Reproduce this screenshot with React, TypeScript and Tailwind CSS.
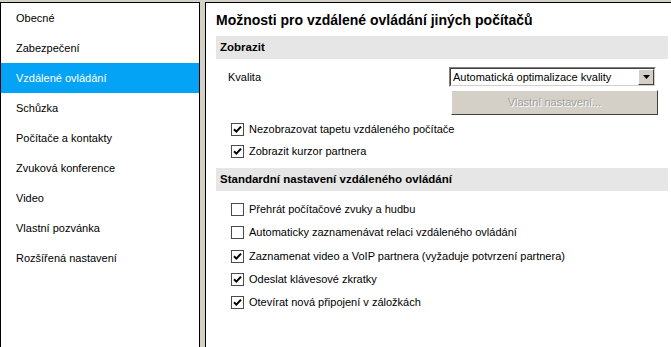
const FONT = "font-['Tahoma','Liberation_Sans',sans-serif]";

const navItems = [
  "Obecné",
  "Zabezpečení",
  "Vzdálené ovládání",
  "Schůzka",
  "Počítače a kontakty",
  "Zvuková konference",
  "Video",
  "Vlastní pozvánka",
  "Rozšířená nastavení",
];

function Check({ checked, label, h = "h-[23px]" }: { checked: boolean; label: string; h?: string }) {
  return (
    <div className={`flex ${h} items-center pl-[15px]`}>
      <span className="flex h-[13px] w-[13px] shrink-0 items-center justify-center border border-[#4a4a4a] bg-white">
        {checked && (
          <svg width="9" height="9" viewBox="0 0 9 9">
            <path d="M1 4.2 L3.4 6.6 L8 1.6" fill="none" stroke="#000" strokeWidth="2" />
          </svg>
        )}
      </span>
      <span className="ml-[5px] text-[11px] text-black">{label}</span>
    </div>
  );
}

function Band({ children }: { children: React.ReactNode }) {
  return (
    <div className="mr-[3px] flex h-[23px] items-center bg-[#e6e6e6] pl-[4px] text-[11.5px] font-bold text-black">
      {children}
    </div>
  );
}

export default function App() {
  return (
    <div className={`flex h-[347px] w-[671px] gap-[5px] overflow-hidden bg-[#d4d0c8] pt-[2px] ${FONT}`}>
      <aside className="flex w-[200px] shrink-0 flex-col border-l border-r border-t border-black bg-white">
        {navItems.map((item) => (
          <div
            key={item}
            className={`flex h-[30px] items-center pl-[15px] text-[11px] ${
              item === "Vzdálené ovládání" ? "bg-[#05a3f5] text-white" : "text-black"
            }`}
          >
            {item}
          </div>
        ))}
      </aside>

      <main className="flex flex-1 flex-col border-l border-t border-black bg-white pl-[10px]">
        <h1 className="flex h-[33px] items-center pt-[1px] text-[14px] font-semibold text-black">
          Možnosti pro vzdálené ovládání jiných počítačů
        </h1>

        <Band>Zobrazit</Band>

        <div className="mt-[8px] flex h-[20px] items-center pr-[15px]">
          <span className="pl-[12px] text-[11px] text-black">Kvalita</span>
          <div className="ml-auto flex h-[20px] w-[207px] items-center border border-t-[#808080] border-l-[#808080] border-b-white border-r-white">
            <div className="flex h-full flex-1 items-center border border-t-[#404040] border-l-[#404040] border-b-[#d4d0c8] border-r-[#d4d0c8] bg-white">
              <span className="pl-[2px] text-[11px] text-black">Automatická optimalizace kvality</span>
              <span className="ml-auto flex h-[16px] w-[16px] items-center justify-center border border-t-white border-l-white border-b-[#404040] border-r-[#404040] bg-[#d4d0c8]">
                <svg width="7" height="4" viewBox="0 0 7 4">
                  <path d="M0 0 H7 L3.5 4 Z" fill="#000" />
                </svg>
              </span>
            </div>
          </div>
        </div>

        <div className="mt-[3px] flex justify-end pr-[13px]">
          <button className="flex h-[25px] w-[207px] items-center justify-center border border-t-white border-l-white border-b-[#404040] border-r-[#404040] bg-[#d4d0c8] text-[11px] text-[#a0a0a0] [text-shadow:1px_1px_0_#fff]">
            Vlastní nastavení...
          </button>
        </div>

        <div className="mt-[3px]">
          <Check checked h="h-[22px]" label="Nezobrazovat tapetu vzdáleného počítače" />
          <Check checked h="h-[22px]" label="Zobrazit kurzor partnera" />
        </div>

        <div className="mt-[6px]">
          <Band>Standardní nastavení vzdáleného ovládání</Band>
        </div>

        <div className="mt-[7px]">
          <Check checked={false} label="Přehrát počítačové zvuky a hudbu" />
          <Check checked={false} label="Automaticky zaznamenávat relaci vzdáleného ovládání" />
          <Check checked h="h-[24px]" label="Zaznamenat video a VoIP partnera (vyžaduje potvrzení partnera)" />
          <Check checked label="Odeslat klávesové zkratky" />
          <Check checked label="Otevírat nová připojení v záložkách" />
        </div>
      </main>
    </div>
  );
}
